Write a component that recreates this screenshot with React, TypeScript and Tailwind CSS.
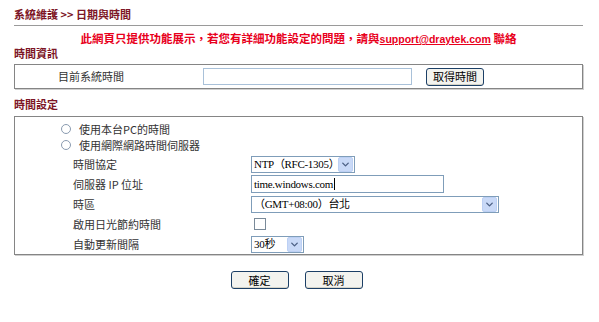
import { ChevronDown } from "lucide-react";

const cjk = "font-['Noto_Sans_CJK_TC','Noto_Sans_CJK_SC',sans-serif]";
const serif = "font-['Liberation_Serif','Noto_Sans_CJK_TC',serif]";

function Arrow() {
  return (
    <span className="flex h-[15px] w-[15px] items-center justify-center rounded-[2px] border border-[#bcd0f4] bg-[#c9d9f7]">
      <ChevronDown size={11} strokeWidth={3} className="text-[#4d6185]" />
    </span>
  );
}

function Select({ value, className }: { value: string; className: string }) {
  return (
    <div
      className={`flex h-[17px] items-center justify-between border border-[#7f9db9] bg-white pl-[2px] pr-[1px] text-[11px] tracking-[-0.3px] text-black ${serif} ${className}`}
    >
      <span className="leading-none">{value}</span>
      <Arrow />
    </div>
  );
}

function XpButton({ label }: { label: string }) {
  return (
    <button
      className={`flex h-[18px] w-[58px] items-center justify-center rounded-[3px] border border-[#1c3f66] bg-[#f3f3ef] text-[11px] leading-none text-black shadow-[inset_0_-1px_0_#d6d4c8] ${cjk}`}
    >
      {label}
    </button>
  );
}

function Radio() {
  return (
    <span className="inline-block h-[10px] w-[10px] rounded-full border border-[#8a9bb0] bg-white" />
  );
}

function Row({ label, children }: { label: string; children: React.ReactNode }) {
  return (
    <div className="grid h-[20px] grid-cols-[178px_1fr] items-center">
      <span className="text-[11px] leading-none">{label}</span>
      <div className="flex items-center">{children}</div>
    </div>
  );
}

export default function App() {
  return (
    <div className={`h-[322px] w-[599px] bg-white pt-[8px] text-[#333] ${cjk}`}>
      <div className="mx-[14px] w-[569px]">
        {/* Title */}
        <h1 className="text-[11px] font-bold leading-[13px] text-[#7d1626]">
          系統維護 &gt;&gt; 日期與時間
        </h1>
        <div className="mt-[4px] h-[1px] bg-[#9a9a9a]" />

        {/* Warning */}
        <p className="mt-[6px] text-center text-[11.5px] font-bold leading-[13px] text-[#e8001c]">
          此網頁只提供功能展示，若您有詳細功能設定的問題，請與
          <span className="font-['Liberation_Sans',sans-serif] text-[10.5px] underline">support@draytek.com</span> 聯絡
        </p>

        {/* Time info */}
        <h2 className="mt-[1px] text-[11px] font-bold leading-[13px] text-[#7d1626]">時間資訊</h2>
        <div className="mt-[4px] flex h-[25px] items-center border border-[#858585] pl-[43px] shadow-[1px_1px_0_#cfcfcf]">
          <span className="w-[145px] text-[11px] leading-none">目前系統時間</span>
          <div className="h-[17px] w-[209px] border border-[#a9c1d9] bg-white" />
          <div className="ml-[14px]">
            <XpButton label="取得時間" />
          </div>
        </div>

        {/* Time settings */}
        <h2 className="mt-[9px] text-[11px] font-bold leading-[13px] text-[#7d1626]">時間設定</h2>
        <div className="mt-[5px] flex h-[139px] flex-col border border-[#858585] pl-[46px] pt-[4px] shadow-[1px_1px_0_#cfcfcf]">
          <div className="flex h-[18px] items-center gap-[8px]">
            <Radio />
            <span className="text-[11px] leading-none">使用本台PC的時間</span>
          </div>
          <div className="flex h-[18px] items-center gap-[8px]">
            <Radio />
            <span className="text-[11px] leading-none">使用網際網路時間伺服器</span>
          </div>
          <div className="pl-[12px] pt-[1px]">
            <Row label="時間協定">
              <Select value="NTP（RFC-1305）" className="w-[104px]" />
            </Row>
            <Row label="伺服器 IP 位址">
              <div
                className={`flex h-[18px] w-[193px] items-center border border-[#7f9db9] bg-white pl-[2px] text-[11px] tracking-[-0.3px] text-black ${serif}`}
              >
                time.windows.com
                <span className="ml-[1px] h-[12px] w-[1px] bg-black" />
              </div>
            </Row>
            <Row label="時區">
              <Select value="（GMT+08:00）台北" className="w-[248px]" />
            </Row>
            <Row label="啟用日光節約時間">
              <span className="ml-[3px] h-[12px] w-[12px] border border-[#7a8a99] bg-white" />
            </Row>
            <Row label="自動更新間隔">
              <Select value="30秒" className="w-[53px]" />
            </Row>
          </div>
        </div>

        {/* Actions */}
        <div className="mt-[16px] flex justify-center gap-[16px] pr-[4px]">
          <XpButton label="確定" />
          <XpButton label="取消" />
        </div>
      </div>
    </div>
  );
}
